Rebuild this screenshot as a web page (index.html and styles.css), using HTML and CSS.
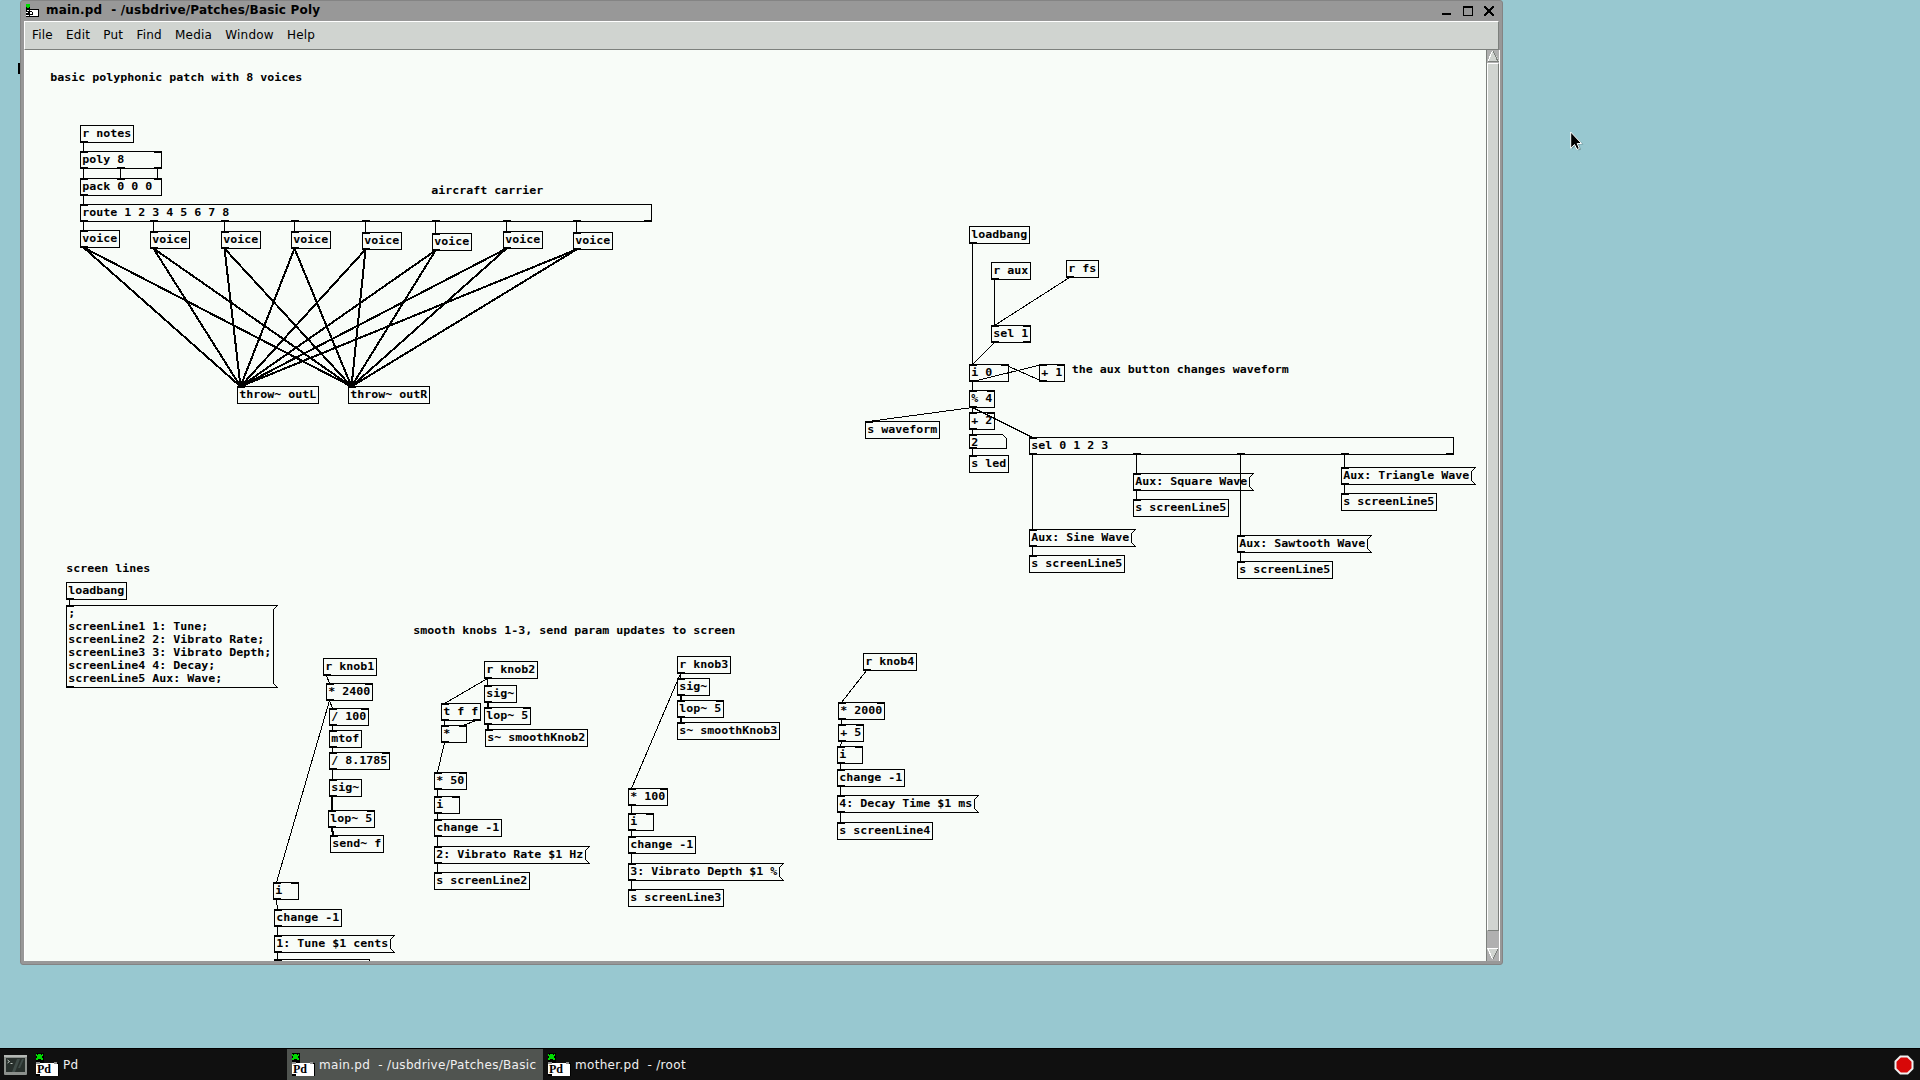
FILE: index.html
```html
<!DOCTYPE html>
<html lang="en">
<head>
<meta charset="utf-8">
<title>main.pd - /usbdrive/Patches/Basic Poly</title>
<link rel="stylesheet" href="styles.css">
</head>
<body>
<svg width="0" height="0" class="defs">
  <symbol id="pd-icon" viewBox="0 0 23 31">
    <g shape-rendering="crispEdges">
      <path fill="#000" d="M0 4h8v10H0zM0 14h23v13H0z"/>
      <path fill="#00dc00" d="M0 5h1v1h1v-1h3v1h1v-1h1v2h-1v2h1v2h-2v-1h-3v1h-2v-2h1v-2h-1z"/>
      <path fill="#909090" d="M0 13h4v2H0zM18 13h3v2h-3z"/>
      <path fill="#fff" d="M0 15h4v-1h14v1h4v12H4v-2H0z"/>
    </g>
  </symbol>
</svg>
<div class="desktop">
  <div class="workspace">
    <div class="peek"></div>
    <main class="window">
      <header class="titlebar">
        <svg class="title-icon" width="13" height="14" viewBox="0 0 13 14" shape-rendering="crispEdges">
          <path fill="#000" d="M0 0h4v5h-4zM0 5h13v8h-13z"/>
          <path fill="#00d800" d="M0 0h4v3h-4zM1 3h2v1h-2z"/>
          <path fill="#fff" d="M1 6h2v1h-2zM4 6h8v6h-8zM0 8h2v1h-2zM0 11h3v1h-3z"/>
          <path fill="#000" d="M4 7h2v1h-2zM6 8h1v3h-1zM4 10h2v1h-2z"/>
        </svg>
        <h1 class="title">main.pd&nbsp; - /usbdrive/Patches/Basic Poly</h1>
        <svg class="controls" width="54" height="12" viewBox="0 0 54 12" shape-rendering="crispEdges">
          <path fill="#000" d="M0 8h9v2H0z"/>
          <path fill="#000" fill-rule="evenodd" d="M21 1h10v10H21zM22 3v7h8V3z"/>
          <path fill="#000" d="M42 1h2v1h1v1h1v1h2v-1h1v-1h1v-1h2v2h-1v1h-1v1h-1v2h1v1h1v1h1v2h-2v-1h-1v-1h-1v-1h-2v1h-1v1h-1v1h-2v-2h1v-1h1v-1h1v-2h-1v-1h-1v-1h-1z"/>
        </svg>
      </header>
      <nav class="menubar">
        <span>File</span><span>Edit</span><span>Put</span><span>Find</span><span>Media</span><span>Window</span><span>Help</span>
      </nav>
      <div class="body">
        <svg class="patch" id="patch" width="1461" height="911" viewBox="25 50 1461 911"></svg>
        <div class="scrollbar">
          <svg width="12" height="12" viewBox="0 0 12 12" shape-rendering="crispEdges">
            <path fill="#d0d4d0" d="M6 0L12 11H1z"/><path stroke="#fff" d="M5.500 1L1 11" fill="none"/><path stroke="#7c807c" d="M6 1L11 11.500H1" fill="none"/>
          </svg>
          <div class="thumb"></div>
          <svg width="12" height="12" viewBox="0 0 12 12" shape-rendering="crispEdges">
            <path fill="#d0d4d0" d="M0 1H11L6 11z"/><path stroke="#7c807c" d="M11 1L6 11" fill="none"/><path stroke="#fff" d="M0 .5H11M1 1L5.500 11" fill="none"/>
          </svg>
        </div>
      </div>
    </main>
    <svg class="cursor" width="16" height="22" viewBox="0 0 16 22">
      <path d="M2 2.500V18L6 14.500L8.500 19.500L11 18.500L9 13.500H13.500z" fill="#000" opacity=".25"/>
      <path d="M.7 1V17.200L4.500 13.500L7 18.500L9.300 17.400L7.200 12.500H11.500z" fill="#000" stroke="#fff"/>
    </svg>
  </div>
  <footer class="taskbar">
    <svg class="terminal" width="23" height="20" viewBox="0 0 23 20">
      <rect width="23" height="20" rx="1" fill="#8c908c"/><rect width="23" height="2" fill="#b4b8b4"/>
      <rect x="2" y="3" width="19" height="14" fill="#28302c"/>
      <path d="M8 17L13 4h3l-5 13zM14 13L18 4h2l-4 9z" fill="#404c48"/><path d="M3.500 5l2 1.500-2 1.500M6.500 8.500h2" stroke="#c0c8c0" fill="none"/>
    </svg>
    <div class="task task-pd"><svg class="pd" width="23" height="31" viewBox="0 0 23 31"><use href="#pd-icon"/><text x="1" y="24" class="pd-glyph">Pd</text></svg><span>Pd</span></div>
    <div class="task task-main"><svg class="pd" width="23" height="31" viewBox="0 0 23 31"><use href="#pd-icon"/><text x="1" y="24" class="pd-glyph">Pd</text></svg><span>main.pd&nbsp; - /usbdrive/Patches/Basic Poly</span></div>
    <div class="task task-mother"><svg class="pd" width="23" height="31" viewBox="0 0 23 31"><use href="#pd-icon"/><text x="1" y="24" class="pd-glyph">Pd</text></svg><span>mother.pd&nbsp; - /root</span></div>
    <svg class="stop" width="20" height="20" viewBox="0 0 20 20">
      <path d="M6 .5h8L19.500 6v8L14 19.500H6L.5 14V6z" fill="#f0f0f0"/><path d="M6.800 2.500h6.400l4.300 4.300v6.400l-4.300 4.300H6.800l-4.300-4.300V6.800z" fill="#d80808"/>
    </svg>
  </footer>
</div>
<script src="patch.js"></script>
</body>
</html>
```
FILE: styles.css
```css
* { box-sizing: border-box; }
body { margin: 0; font-family: "DejaVu Sans", sans-serif; overflow: hidden; }
.desktop { width: 1920px; height: 1080px; display: flex; flex-direction: column; background: #98c8d0; }
.workspace { position: relative; flex: 1; padding-left: 20px; }
.peek { position: absolute; left: 18px; top: 63px; width: 3px; height: 11px; background: #000; }
.window {
  position: relative; width: 1483px; height: 965px; display: flex; flex-direction: column;
  background: #989898; border: 1px solid #848484; border-radius: 3px; padding: 0 3px 3px;
}
.titlebar { height: 20px; display: flex; align-items: flex-start; padding: 3px 3px 0 2px; }
.title-icon { margin-right: 7px; }
.title { margin: -2px 0 0; font: bold 12px/16px "DejaVu Sans", sans-serif; letter-spacing: .2px; white-space: pre; color: #000; }
.controls { margin-left: auto; margin-top: 1px; }
.menubar {
  height: 29px; display: flex; gap: 13.2px; padding: 0 7px; background: #d0d4d0;
  border-top: 1px solid #fff; border-bottom: 1px solid #7c807c; border-left: 1px solid #fff; border-right: 1px solid #7c807c;
  font-size: 12px; line-height: 26px; letter-spacing: .2px; color: #000;
}
.body { flex: 1; display: flex; border-left: 1px solid #fff; min-height: 0; background: #f8fcf8; }
.patch { display: block; flex: none; }
.scrollbar {
  width: 14px; display: flex; flex-direction: column; background: #b0b0b0; padding: 0 0 1px;
  border-left: 1px solid #7c807c; border-right: 1px solid #fff;
}
.scrollbar svg { flex: none; display: block; }
.thumb { height: 868px; margin-bottom: auto; margin-top: 1px; background: #d0d4d0; border: 1px solid; border-color: #fff #7c807c #7c807c #fff; }
.box { fill: none; stroke: #000; stroke-width: 1; shape-rendering: crispEdges; }
.iolet { fill: #000; shape-rendering: crispEdges; }
.wire { stroke: #000; stroke-width: 1; shape-rendering: crispEdges; }
.signal { stroke-width: 2; }
.label { font: bold 11px "DejaVu Sans Mono", monospace; fill: #000; white-space: pre; }
.cursor { position: absolute; left: 1570px; top: 131px; }
.taskbar { height: 32px; display: flex; align-items: stretch; background: #101010; border-top: 1px solid #000; color: #f0f0f0; font-size: 12px; line-height: 32px; letter-spacing: .3px; }
.terminal { margin: 6px 9px 0 4px; flex: none; }
.task { display: flex; overflow: hidden; white-space: pre; }
.task span { overflow: hidden; }
.pd { flex: none; margin-right: 4px; }
.pd-glyph { font: bold 12px "Liberation Serif", serif; letter-spacing: 0; fill: #000; }
.task-pd { width: 251px; }
.task-main { width: 256px; background: #505450; padding: 0 2px 0 5px; }
.task-mother { width: 256px; padding-left: 5px; }
.stop { margin: 6px 6px 0 auto; }
.defs { position: absolute; }
```
FILE: patch.js
```js
// [id, kind, x, y, width in characters, text, inlets, outlets]
const nodes = [
  ["notes","obj",80,125,0,"r notes",0,1],
  ["poly","obj",80,151,11,"poly 8",2,3],
  ["pack","obj",80,178,11,"pack 0 0 0",3,1],
  ["route","obj",80,204,81,"route 1 2 3 4 5 6 7 8",1,9],
  ["v1","obj",80,230,0,"voice",1,1],
  ["v2","obj",150,231,0,"voice",1,1],
  ["v3","obj",221,231,0,"voice",1,1],
  ["v4","obj",291,231,0,"voice",1,1],
  ["v5","obj",362,232,0,"voice",1,1],
  ["v6","obj",432,233,0,"voice",1,1],
  ["v7","obj",503,231,0,"voice",1,1],
  ["v8","obj",573,232,0,"voice",1,1],
  ["outL","obj",237,386,0,"throw~ outL",1,0],
  ["outR","obj",348,386,0,"throw~ outR",1,0],
  ["lb1","obj",969,226,0,"loadbang",0,1],
  ["aux","obj",991,262,0,"r aux",0,1],
  ["fs","obj",1066,260,0,"r fs",0,1],
  ["sel1","obj",991,325,0,"sel 1",2,2],
  ["i0","obj",969,364,5,"i 0",2,1],
  ["add1","obj",1039,364,0,"+ 1",2,1],
  ["mod4","obj",969,390,0,"% 4",2,1],
  ["add2","obj",969,412,0,"+ 2",2,1],
  ["num","num",969,434,0,"2",1,1],
  ["led","obj",969,455,0,"s led",1,0],
  ["wave","obj",865,421,0,"s waveform",1,0],
  ["sel4","obj",1029,437,60,"sel 0 1 2 3",1,5],
  ["mSq","msg",1133,473,0,"Aux: Square Wave",1,1],
  ["sSq","obj",1133,499,0,"s screenLine5",1,0],
  ["mTr","msg",1341,467,0,"Aux: Triangle Wave",1,1],
  ["sTr","obj",1341,493,0,"s screenLine5",1,0],
  ["mSi","msg",1029,529,0,"Aux: Sine Wave",1,1],
  ["sSi","obj",1029,555,0,"s screenLine5",1,0],
  ["mSa","msg",1237,535,0,"Aux: Sawtooth Wave",1,1],
  ["sSa","obj",1237,561,0,"s screenLine5",1,0],
  ["lb2","obj",66,582,0,"loadbang",0,1],
  ["lines","msg",66,605,29,";\nscreenLine1 1: Tune;\nscreenLine2 2: Vibrato Rate;\nscreenLine3 3: Vibrato Depth;\nscreenLine4 4: Decay;\nscreenLine5 Aux: Wave;",1,1],
  ["k1","obj",323,658,0,"r knob1",0,1],
  ["m2400","obj",326,683,0,"* 2400",2,1],
  ["d100","obj",329,708,0,"/ 100",2,1],
  ["mtof","obj",329,730,0,"mtof",1,1],
  ["d8","obj",329,752,0,"/ 8.1785",2,1],
  ["sig1","obj",329,779,0,"sig~",1,1],
  ["lop1","obj",328,810,0,"lop~ 5",2,1],
  ["send","obj",330,835,0,"send~ f",1,0],
  ["i1","obj",273,882,3,"i",2,1],
  ["c1","obj",274,909,9,"change -1",1,1],
  ["m1","msg",274,935,0,"1: Tune $1 cents",1,1],
  ["s1","obj",274,959,13,"",1,0],
  ["k2","obj",484,661,0,"r knob2",0,1],
  ["sig2","obj",484,685,0,"sig~",1,1],
  ["lop2","obj",484,707,0,"lop~ 5",2,1],
  ["sm2","obj",485,729,0,"s~ smoothKnob2",1,0],
  ["tff","obj",441,703,0,"t f f",1,2],
  ["mul","obj",441,725,3,"*",2,1],
  ["m50","obj",434,772,0,"* 50",2,1],
  ["i2","obj",434,796,3,"i",2,1],
  ["c2","obj",434,819,0,"change -1",1,1],
  ["m2","msg",434,846,0,"2: Vibrato Rate $1 Hz",1,1],
  ["s2","obj",434,872,0,"s screenLine2",1,0],
  ["k3","obj",677,656,0,"r knob3",0,1],
  ["sig3","obj",677,678,0,"sig~",1,1],
  ["lop3","obj",677,700,0,"lop~ 5",2,1],
  ["sm3","obj",677,722,0,"s~ smoothKnob3",1,0],
  ["m100","obj",628,788,0,"* 100",2,1],
  ["i3","obj",628,813,3,"i",2,1],
  ["c3","obj",628,836,0,"change -1",1,1],
  ["m3","msg",628,863,0,"3: Vibrato Depth $1 %",1,1],
  ["s3","obj",628,889,0,"s screenLine3",1,0],
  ["k4","obj",863,653,0,"r knob4",0,1],
  ["m2000","obj",838,702,0,"* 2000",2,1],
  ["add5","obj",838,724,0,"+ 5",2,1],
  ["i4","obj",837,746,3,"i",2,1],
  ["c4","obj",837,769,0,"change -1",1,1],
  ["m4","msg",837,795,0,"4: Decay Time $1 ms",1,1],
  ["s4","obj",837,822,0,"s screenLine4",1,0]
];

const comments = [
  [50,81,"basic polyphonic patch with 8 voices"],
  [431,194,"aircraft carrier"],
  [1071.5,373,"the aux button changes waveform"],
  [66,572,"screen lines"],
  [413,634,"smooth knobs 1-3, send param updates to screen"]
];

// "source[.outlet] target[.inlet]"; a trailing ~ marks a signal wire
const wires = [
  "notes poly","poly pack","poly.1 pack.1","poly.2 pack.2","pack route",
  "lb1 i0","aux sel1","fs sel1","sel1 i0","i0 add1","add1 i0.1","i0 mod4","mod4 add2","mod4 wave","mod4 sel4",
  "add2 num","num led","sel4 mSi","sel4.1 mSq","sel4.2 mSa","sel4.3 mTr","mSi sSi","mSq sSq","mSa sSa","mTr sTr",
  "lb2 lines","k1 m2400","m2400 d100","m2400 i1","d100 mtof","mtof d8","d8 sig1","sig1 lop1 ~","lop1 send ~",
  "i1 c1","c1 m1","m1 s1","k2 sig2","k2 tff","sig2 lop2 ~","lop2 sm2 ~","tff mul","tff.1 mul.1","mul m50","m50 i2","i2 c2","c2 m2","m2 s2",
  "k3 sig3","k3 m100","sig3 lop3 ~","lop3 sm3 ~","m100 i3","i3 c3","c3 m3","m3 s3",
  "k4 m2000","m2000 add5","add5 i4","i4 c4","c4 m4","m4 s4"
];
for (let v = 1; v <= 8; v++) wires.push(`route.${v - 1} v${v}`, `v${v} outL ~`, `v${v} outR ~`);

const svg = document.getElementById("patch");
function add(tag, attrs, text) {
  const el = document.createElementNS("http://www.w3.org/2000/svg", tag);
  for (const k in attrs) el.setAttribute(k, attrs[k]);
  if (text) el.textContent = text;
  svg.appendChild(el);
}
// every character cell is 7px wide
function label(x, y, text) {
  add("text", { class: "label", x: x + .3, y, textLength: text.length * 7, lengthAdjust: "spacingAndGlyphs" }, text);
}

const byId = {};
for (const [id, kind, x, y, chars, text, ins, outs] of nodes) {
  const rows = text.split("\n");
  const w = kind === "num" ? 37 : (chars || text.length) * 7 + 4;
  const h = kind === "num" ? 14 : rows.length * 13 + 4;
  const port = (n, total) => x + (total > 1 ? Math.floor((w - 7) * n / (total - 1)) : 0);
  byId[id] = { x, y, w, h, ins, outs, port };
  const l = x + .5, t = y + .5, r = l + w, b = t + h;
  const d = kind === "msg" ? `M${r + 4} ${t}H${l}V${b}H${r + 4}L${r} ${b - 4}V${t + 4}Z`
    : kind === "num" ? `M${l} ${t}H${r - 4}L${r} ${t + 4}V${b}H${l}Z`
    : `M${l} ${t}H${r}V${b}H${l}Z`;
  add("path", { class: "box", d });
  for (let n = 0; n < ins; n++) add("rect", { class: "iolet", x: port(n, ins), y, width: 8, height: 2 });
  for (let n = 0; n < outs; n++) add("rect", { class: "iolet", x: port(n, outs), y: y + h - 1, width: 8, height: 2 });
  rows.forEach((row, i) => { if (row) label(x + 2, y + 12 + i * 13, row); });
}
for (const [x, y, text] of comments) label(x, y, text);
for (const wire of wires) {
  const [from, to, sig] = wire.split(" ");
  const [a, o = 0] = from.split("."), [c, i = 0] = to.split(".");
  const s = byId[a], e = byId[c];
  add("line", { class: sig ? "wire signal" : "wire", x1: s.port(+o, s.outs) + 3.5, y1: s.y + s.h + .5, x2: e.port(+i, e.ins) + 3.5, y2: e.y + .5 });
}
```
